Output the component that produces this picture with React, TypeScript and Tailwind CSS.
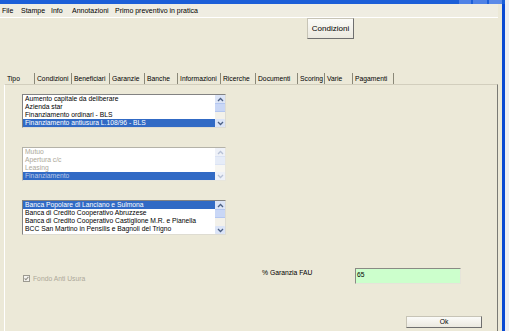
import React from "react";

const FONT = "font-['Liberation_Sans',Arial,sans-serif]";

function Chevron({ up, color }: { up: boolean; color: string }) {
  return (
    <svg width="7" height="5" viewBox="0 0 7 5">
      <polyline
        points={up ? "1,4 3.5,1.5 6,4" : "1,1 3.5,3.5 6,1"}
        fill="none"
        stroke={color}
        strokeWidth="1.3"
      />
    </svg>
  );
}

function ScrollBar({ disabled }: { disabled?: boolean }) {
  const arrow = disabled ? "#b7c1d6" : "#4d6185";
  return (
    <div className={`w-[10px] flex flex-col ${disabled ? "bg-[#f7f6f2]" : "bg-[#f3f1ea]"}`}>
      <div className={`h-[8px] flex items-center justify-center rounded-[1px] ${disabled ? "bg-[#eef1f8]" : "bg-[#dbe4f7]"}`}>
        <Chevron up color={arrow} />
      </div>
      <div className={`h-[9px] border-y ${disabled ? "bg-[#e6ecf8] border-[#dbe3f4]" : "bg-[#c9d7f6] border-[#b4c7f1]"}`} />
      <div className="flex-1" />
      <div className={`h-[8px] flex items-center justify-center rounded-[1px] ${disabled ? "bg-[#eef1f8]" : "bg-[#dbe4f7]"}`}>
        <Chevron up={false} color={arrow} />
      </div>
    </div>
  );
}

function ListBox({
  items,
  selected,
  disabled,
  className,
}: {
  items: string[];
  selected: number;
  disabled?: boolean;
  className: string;
}) {
  return (
    <div
      className={`ml-[17px] w-[204px] flex bg-white border ${
        disabled
          ? "border-t-[#b4b2a8] border-l-[#b4b2a8] border-r-[#e8e6dc] border-b-[#e8e6dc]"
          : "border-t-[#828282] border-l-[#828282] border-r-[#dedcd2] border-b-[#dedcd2]"
      } ${className}`}
    >
      <div className="flex-1 flex flex-col overflow-hidden">
        {items.map((it, i) => {
          const sel = i === selected;
          let cls = "text-black";
          if (disabled) cls = sel ? "bg-[#316AC5] text-[#b9c8e8]" : "text-[#aca899]";
          else if (sel) cls = "bg-[#316AC5] text-white";
          return (
            <div key={it} className={`h-[8px] leading-[8px] pl-[2px] whitespace-nowrap overflow-hidden text-[6.75px] ${cls}`}>
              {it}
            </div>
          );
        })}
      </div>
      <ScrollBar disabled={disabled} />
    </div>
  );
}

const tabs: { label: string; w: string }[] = [
  { label: "Condizioni", w: "w-[37px]" },
  { label: "Beneficiari", w: "w-[38px]" },
  { label: "Garanzie", w: "w-[35px]" },
  { label: "Banche", w: "w-[33px]" },
  { label: "Informazioni", w: "w-[43px]" },
  { label: "Ricerche", w: "w-[35px]" },
  { label: "Documenti", w: "w-[42px]" },
  { label: "Scoring", w: "w-[27px]" },
  { label: "Varie", w: "w-[28px]" },
  { label: "Pagamenti", w: "w-[41px]" },
];

export default function App() {
  return (
    <div className={`w-[509px] h-[331px] flex bg-[#eeeef2] overflow-hidden ${FONT}`}>
      <div className="w-[505px] h-full flex flex-col">
        {/* title bar remnant */}
        <div className="h-[4px] flex bg-[#1c5fd8]">
          <div className="flex-1" />
          <div className="w-[12px] bg-[#4f82e6]" />
          <div className="w-[2px]" />
          <div className="w-[14px] bg-[#4f82e6]" />
          <div className="w-[2px]" />
          <div className="w-[13px] bg-[#5b8ae8]" />
          <div className="w-[3px]" />
        </div>
        <div className="flex-1 flex">
          <div className="flex-1 flex flex-col bg-[#ECE9D8]">
            {/* menu */}
            <div className="h-[13px] flex items-center text-[7px] leading-[13px] text-black bg-[#efede2]">
              <span className="w-[21px] pl-[2px]">File</span>
              <span className="w-[30px]">Stampe</span>
              <span className="w-[21px]">Info</span>
              <span className="w-[43px]">Annotazioni</span>
              <span>Primo preventivo in pratica</span>
            </div>
            <div className="h-[1px] bg-white" />
            {/* Condizioni button */}
            <div className="flex">
              <div className="ml-[307px] w-[47px] h-[21px] flex items-center justify-center text-[8px] text-black bg-gradient-to-b from-[#fbfbf8] to-[#ebe9df] border border-[#c7c4b6] border-r-[#6f6f6f] border-b-[#6f6f6f]">
                Condizioni
              </div>
            </div>
            {/* tabs */}
            <div className="mt-[34px] h-[11px] flex text-[6.75px] leading-[11px] text-black">
              <div className="ml-[4px] w-[30px] pl-[3px]">Tipo</div>
              {tabs.map((t) => (
                <div key={t.label} className={`${t.w} h-[12px] pl-[2px] border-l border-[#8a8878] whitespace-nowrap`}>
                  {t.label}
                </div>
              ))}
              <div className="h-[12px] border-l border-[#8a8878]" />
            </div>
            {/* tab page */}
            <div className="ml-[4px] w-[494px] flex-1 flex flex-col border-t border-t-[#d2cebd] border-l border-l-white border-r border-r-[#7a7a74]">
              <ListBox
                className="mt-[9px] h-[34px]"
                selected={3}
                items={[
                  "Aumento capitale da deliberare",
                  "Azienda star",
                  "Finanziamento ordinari - BLS",
                  "Finanziamento antiusura L.108/96 - BLS",
                ]}
              />
              <ListBox
                className="mt-[19px] h-[34px]"
                selected={3}
                disabled
                items={["Mutuo", "Apertura c/c", "Leasing", "Finanziamento"]}
              />
              <ListBox
                className="mt-[19px] h-[35px]"
                selected={0}
                items={[
                  "Banca Popolare di Lanciano e Sulmona",
                  "Banca di Credito Cooperativo Abruzzese",
                  "Banca di Credito Cooperativo Castiglione M.R. e Pianella",
                  "BCC San Martino in Pensilis e Bagnoli del Trigno",
                ]}
              />
              {/* bottom row */}
              <div className="mt-[33px] h-[16px] flex text-[6.75px]">
                <div className="ml-[18px] w-[239px] flex items-start pt-[7px]">
                  <div className="w-[7px] h-[7px] border border-[#9c9a90] bg-[#f4f3ee] flex items-center justify-center">
                    <svg width="5" height="5" viewBox="0 0 5 5">
                      <polyline points="0.6,2.4 1.9,3.8 4.4,0.9" fill="none" stroke="#8f8d84" strokeWidth="1.1" />
                    </svg>
                  </div>
                  <span className="ml-[3px] leading-[7px] text-[#aca899]">Fondo Anti Usura</span>
                </div>
                <div className="w-[93px] pt-[1px] leading-[8px] text-black">% Garanzia FAU</div>
                <div className="w-[106px] h-[16px] bg-[#ccffcc] border border-t-[#8a8a84] border-l-[#8a8a84] border-r-[#e6e4da] border-b-[#e6e4da] pl-[1px] pt-[2px] leading-[8px] text-black">
                  65
                </div>
              </div>
              <div className="mt-[32px] flex">
                <div className="ml-[401px] w-[76px] h-[12px] flex items-center justify-center text-[6.75px] text-black bg-gradient-to-b from-[#fbfbf8] to-[#ebe9df] border border-[#c7c4b6] border-r-[#6f6f6f] border-b-[#6f6f6f]">
                  Ok
                </div>
              </div>
            </div>
          </div>
          <div className="w-[4px] bg-[#ECE9D8]" />
          <div className="w-[3px] bg-[#0b4ad3]" />
        </div>
      </div>
      <div className="flex-1 bg-[#eeeef2]" />
    </div>
  );
}
